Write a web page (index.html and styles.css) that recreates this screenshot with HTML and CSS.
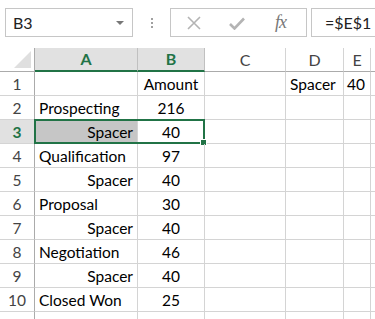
FILE: index.html
```html
<!DOCTYPE html>
<html>
<head>
<meta charset="utf-8">
<link rel="stylesheet" href="styles.css">
</head>
<body>
<div class="toolbar">
  <div class="namebox"><span class="nb-text">B3</span><span class="nb-arrow"></span></div>
  <div class="dots"><i></i><i></i><i></i></div>
  <div class="fbuttons">
    <svg class="ico-x" width="14" height="14" viewBox="0 0 14 14"><path d="M1 1 L13 13 M13 1 L1 13" stroke="#b4b4b4" stroke-width="1.6" fill="none"/></svg>
    <svg class="ico-check" width="16" height="13" viewBox="0 0 16 13"><path d="M1 7 L5.5 11.5 L15 1.5" stroke="#b4b4b4" stroke-width="2.6" fill="none"/></svg>
    <span class="fx">fx</span>
  </div>
  <div class="formula">=$E$1</div>
</div>
<div class="sheet">
  <div class="row head">
    <div class="c rh corner"><span class="tri"></span></div>
    <div class="c a sel">A</div>
    <div class="c b sel">B</div>
    <div class="c cc">C</div>
    <div class="c d">D</div>
    <div class="c e">E</div>
    <div class="c f"></div>
  </div>
  <div class="row">
    <div class="c rh">1</div><div class="c a"></div><div class="c b ctr">Amount</div><div class="c cc"></div><div class="c d">Spacer</div><div class="c e num">40</div><div class="c f"></div>
  </div>
  <div class="row">
    <div class="c rh">2</div><div class="c a">Prospecting</div><div class="c b ctr">216</div><div class="c cc"></div><div class="c d"></div><div class="c e"></div><div class="c f"></div>
  </div>
  <div class="row">
    <div class="c rh rsel">3</div><div class="c a right shade">Spacer</div><div class="c b ctr">40</div><div class="c cc"></div><div class="c d"></div><div class="c e"></div><div class="c f"></div>
    <div class="selbox"><span class="handle"></span></div>
  </div>
  <div class="row">
    <div class="c rh">4</div><div class="c a">Qualification</div><div class="c b ctr">97</div><div class="c cc"></div><div class="c d"></div><div class="c e"></div><div class="c f"></div>
  </div>
  <div class="row">
    <div class="c rh">5</div><div class="c a right">Spacer</div><div class="c b ctr">40</div><div class="c cc"></div><div class="c d"></div><div class="c e"></div><div class="c f"></div>
  </div>
  <div class="row">
    <div class="c rh">6</div><div class="c a">Proposal</div><div class="c b ctr">30</div><div class="c cc"></div><div class="c d"></div><div class="c e"></div><div class="c f"></div>
  </div>
  <div class="row">
    <div class="c rh">7</div><div class="c a right">Spacer</div><div class="c b ctr">40</div><div class="c cc"></div><div class="c d"></div><div class="c e"></div><div class="c f"></div>
  </div>
  <div class="row">
    <div class="c rh">8</div><div class="c a">Negotiation</div><div class="c b ctr">46</div><div class="c cc"></div><div class="c d"></div><div class="c e"></div><div class="c f"></div>
  </div>
  <div class="row">
    <div class="c rh">9</div><div class="c a right">Spacer</div><div class="c b ctr">40</div><div class="c cc"></div><div class="c d"></div><div class="c e"></div><div class="c f"></div>
  </div>
  <div class="row">
    <div class="c rh">10</div><div class="c a">Closed Won</div><div class="c b ctr">25</div><div class="c cc"></div><div class="c d"></div><div class="c e"></div><div class="c f"></div>
  </div>
  <div class="row">
    <div class="c rh"></div><div class="c a"></div><div class="c b"></div><div class="c cc"></div><div class="c d"></div><div class="c e"></div><div class="c f"></div>
  </div>
</div>
</body>
</html>
```
FILE: styles.css
```css
html, body {
  margin: 0;
  padding: 0;
  background: #fff;
  overflow: hidden;
}
body {
  width: 375px;
  height: 319px;
  font-family: Lato, "Open Sans", sans-serif;
  color: #000;
}
.toolbar {
  height: 48px;
  display: flex;
  align-items: flex-start;
  padding-top: 8px;
  box-sizing: border-box;
}
.namebox {
  margin-left: 5px;
  width: 128px;
  height: 29px;
  box-sizing: border-box;
  border: 1px solid #c6c6c6;
  display: flex;
  align-items: center;
  justify-content: space-between;
  padding: 0 8px 0 7px;
}
.nb-text {
  font-size: 16px;
  color: #222;
}
.nb-arrow {
  width: 0;
  height: 0;
  border-left: 4px solid transparent;
  border-right: 4px solid transparent;
  border-top: 4px solid #777;
  margin-top: 1px;
}
.dots {
  width: 37px;
  height: 29px;
  display: flex;
  flex-direction: column;
  align-items: center;
  justify-content: center;
  gap: 2px;
}
.dots i {
  display: block;
  width: 2px;
  height: 2px;
  background: #a0a0a0;
}
.fbuttons {
  width: 137px;
  height: 29px;
  box-sizing: border-box;
  border: 1px solid #c6c6c6;
  display: flex;
  align-items: center;
  position: relative;
}
.ico-x { margin-left: 16px; }
.ico-check { margin-left: 28px; margin-top: 1px; }
.fx {
  margin-left: 30px;
  font-family: "Liberation Serif", "DejaVu Serif", serif;
  font-style: italic;
  font-size: 18px;
  color: #777;
  letter-spacing: -1px;
}
.formula {
  margin-left: 4px;
  flex: 1;
  min-width: 0;
  height: 29px;
  box-sizing: border-box;
  border: 1px solid #c6c6c6;
  border-right: none;
  padding-left: 13px;
  font-size: 16px;
  line-height: 27px;
  color: #222;
}
.sheet {
  position: relative;
  height: 271px;
  overflow: hidden;
}
.row {
  display: flex;
  height: 24px;
  position: relative;
}
.c {
  box-sizing: border-box;
  height: 24px;
  border-right: 1px solid #d4d4d4;
  border-bottom: 1px solid #d4d4d4;
  font-size: 15.5px;
  line-height: 23px;
  padding: 1px 4px 0 4px;
  white-space: nowrap;
  overflow: visible;
  flex: none;
}
.rh {
  width: 35px;
  border-right: 1px solid #ababab;
  text-align: center;
  color: #444;
  padding: 1px 0 0 0;
  background: #fff;
}
.a { width: 103px; }
.b { width: 67px; }
.cc { width: 81px; }
.d { width: 58px; }
.e { width: 27px; }
.f { width: 4px; padding: 0; border-right: none; }
.ctr { text-align: center; }
.right { text-align: right; }
.num { text-align: right; padding-right: 5px; padding-left: 0; }
.shade { background: #c6c6c6; }

.head .c {
  height: 24px;
  text-align: center;
  color: #444;
  border-right: 1px solid #d4d4d4;
  border-bottom: 1px solid #ababab;
  font-size: 16px;
  padding: 0;
  line-height: 23px;
}
.head .f { border-right: none; }
.head .corner {
  position: relative;
  border-right: 1px solid #ababab;
}
.tri {
  position: absolute;
  right: 3px;
  bottom: 3px;
  width: 0;
  height: 0;
  border-left: 17px solid transparent;
  border-bottom: 17px solid #dfdfdf;
}
.head .sel {
  background: #e1e1e1;
  color: #217346;
  font-weight: bold;
  border-bottom: 2px solid #217346;
  border-right: 1px solid #c0c0c0;
  line-height: 22px;
}
.rsel {
  background: #e1e1e1;
  color: #217346;
  font-weight: bold;
}
.selbox {
  position: absolute;
  left: 34px;
  top: -1px;
  width: 171px;
  height: 25px;
  box-sizing: border-box;
  border: 2px solid #217346;
  pointer-events: none;
}
.handle {
  position: absolute;
  right: -4px;
  bottom: -4px;
  width: 5px;
  height: 5px;
  background: #217346;
  border: 1px solid #fff;
}
```
